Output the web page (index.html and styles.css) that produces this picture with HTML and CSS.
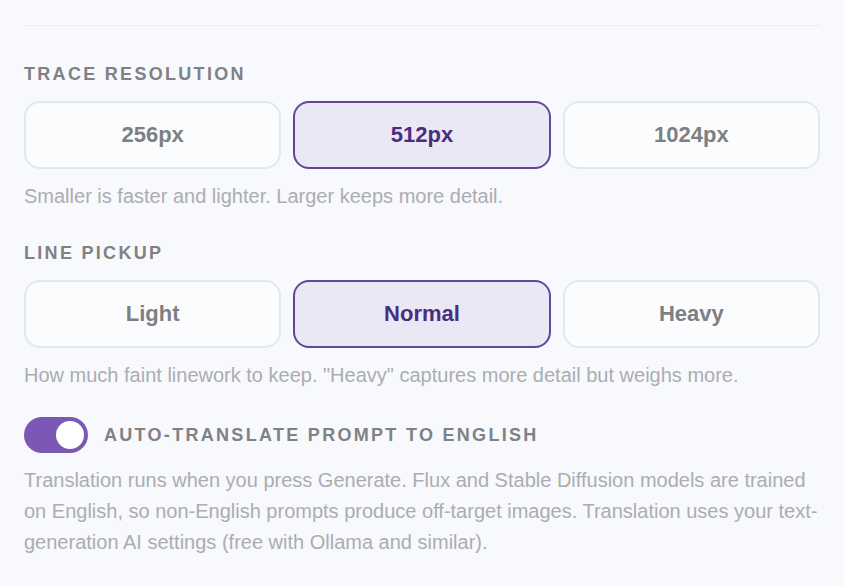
FILE: index.html
```html
<!DOCTYPE html>
<html lang="en">
<head>
<meta charset="utf-8">
<title>Trace settings</title>
<link rel="stylesheet" href="styles.css">
</head>
<body>
<div class="panel">
  <div class="divider"></div>

  <section class="group first">
    <div class="label">Trace resolution</div>
    <div class="options">
      <button class="opt">256px</button>
      <button class="opt active">512px</button>
      <button class="opt">1024px</button>
    </div>
    <p class="hint">Smaller is faster and lighter. Larger keeps more detail.</p>
  </section>

  <section class="group">
    <div class="label">Line pickup</div>
    <div class="options">
      <button class="opt">Light</button>
      <button class="opt active">Normal</button>
      <button class="opt">Heavy</button>
    </div>
    <p class="hint">How much faint linework to keep. "Heavy" captures more detail but weighs more.</p>
  </section>

  <section class="toggle-group">
    <div class="toggle-row">
      <span class="switch on"><span class="knob"></span></span>
      <span class="label toggle-label">Auto-translate prompt to English</span>
    </div>
    <p class="desc">Translation runs when you press Generate. Flux and Stable Diffusion models are trained on English, so non-English prompts produce off-target images. Translation uses your text-generation AI settings (free with Ollama and similar).</p>
  </section>
</div>
</body>
</html>
```

FILE: styles.css
```css
html, body {
  margin: 0;
  padding: 0;
  background: #f7f9fc;
}
body {
  font-family: "Liberation Sans", Arial, Helvetica, sans-serif;
  color: #7e8084;
}
.panel {
  padding: 25px 24px 0 24px;
}
.divider {
  height: 1px;
  background: #eaedf1;
}
.group {
  display: flex;
  flex-direction: column;
}
.group.first {
  margin-top: 38px;
}
.group + .group {
  margin-top: 35px;
}
.label {
  font-size: 18px;
  line-height: 22px;
  font-weight: 700;
  letter-spacing: 2.3px;
  text-transform: uppercase;
  color: #7f8185;
}
.group .label {
  margin-top: -1px;
}
.options {
  display: grid;
  grid-template-columns: repeat(3, 1fr);
  gap: 12px;
  margin-top: 16px;
}
.opt {
  height: 68px;
  box-sizing: border-box;
  border: 2px solid #e4e7eb;
  border-radius: 16px;
  background: #fbfcfe;
  font-family: "Liberation Sans", Arial, Helvetica, sans-serif;
  font-size: 22px;
  font-weight: 700;
  color: #7d7f83;
  padding: 0;
}
.opt.active {
  background: #ebe8f5;
  border-color: #644598;
  color: #4a2d7e;
}
.hint {
  margin: 15px 0 0 0;
  font-size: 20px;
  line-height: 24px;
  color: #abadb1;
}
.toggle-group {
  margin-top: 30px;
}
.toggle-row {
  display: flex;
  align-items: center;
  gap: 16px;
}
.switch {
  position: relative;
  width: 64px;
  height: 36px;
  border-radius: 18px;
  background: #7b58b6;
  flex: none;
}
.knob {
  position: absolute;
  top: 4px;
  right: 4px;
  width: 28px;
  height: 28px;
  border-radius: 50%;
  background: #ffffff;
}
.desc {
  margin: 12px 0 0 0;
  font-size: 20px;
  line-height: 31px;
  color: #abadb1;
}
```
